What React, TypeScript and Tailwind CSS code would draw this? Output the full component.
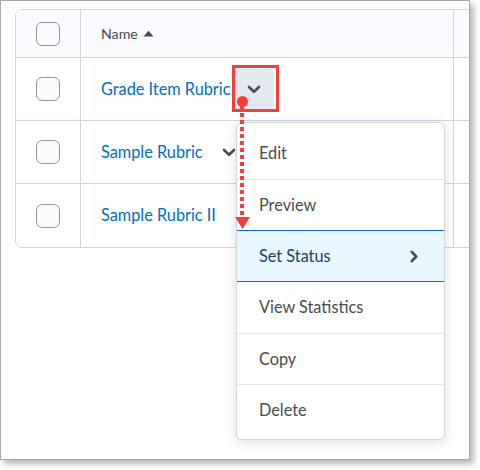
import React from "react";

const rows = [
  { name: "Grade Item Rubric", active: true },
  { name: "Sample Rubric", active: false, chevron: true },
  { name: "Sample Rubric II", active: false },
];

const menuItems = ["Edit", "Preview", "Set Status", "View Statistics", "Copy", "Delete"];

function ChevronDown({ className = "" }: { className?: string }) {
  return (
    <svg width="14" height="9" viewBox="0 0 14 9" className={className}>
      <path d="M2 2 L7 6.8 L12 2" fill="none" stroke="#494c4e" strokeWidth="2.6" strokeLinecap="round" strokeLinejoin="round" />
    </svg>
  );
}

function Checkbox() {
  return <div className="w-[24px] h-[24px] rounded-[6px] border border-[#8d949a] bg-[#f9fbff]" />;
}

export default function App() {
  return (
    <div className="w-[480px] h-[470px] bg-white font-['Lato',sans-serif]">
      <div className="relative w-[470px] h-[460px] border border-[#a8a8a8] bg-white overflow-hidden shadow-[4px_4px_6px_rgba(0,0,0,0.28)]">
        {/* Table */}
        <div className="mt-[8px] ml-[14px] w-[520px] border border-[#cfd6de] rounded-l-[7px] overflow-hidden">
          <div className="flex h-[48px] bg-[#f9fbff] border-b border-[#cfd6de]">
            <div className="w-[65px] border-r border-[#cfd6de] flex items-center justify-center">
              <Checkbox />
            </div>
            <div className="w-[373px] border-r border-[#cfd6de] flex items-center pl-[20px] text-[14.2px] text-[#494c4e]">
              Name
              <svg width="11" height="7" viewBox="0 0 11 7" className="ml-[5px]">
                <path d="M0.5 6.5 L5.5 0.8 L10.5 6.5 Z" fill="#494c4e" />
              </svg>
            </div>
            <div className="flex-1" />
          </div>
          {rows.map((r, i) => (
            <div key={r.name} className={`flex h-[63px] ${i < rows.length - 1 ? "border-b border-[#cfd6de]" : ""}`}>
              <div className="w-[65px] border-r border-[#cfd6de] flex items-center justify-center">
                <Checkbox />
              </div>
              <div className="w-[373px] border-r border-[#cfd6de] flex items-center pl-[20px]">
                <span className="text-[16.3px] text-[#006fbf]">{r.name}</span>
                {r.active && (
                  <div className="ml-[3px] w-[41px] h-[40px] rounded-[4px] bg-[#e3e9f1] flex items-center justify-center">
                    <ChevronDown />
                  </div>
                )}
                {r.chevron && (
                  <div className="ml-[6px] w-[40px] h-[40px] flex items-center justify-center">
                    <ChevronDown />
                  </div>
                )}
              </div>
              <div className="flex-1" />
            </div>
          ))}
        </div>

        {/* Dropdown menu */}
        <div className="absolute left-[235px] top-[121px] w-[209px] h-[318px] rounded-[6px] border border-[#cfd6de] bg-white shadow-[0_2px_12px_rgba(0,0,0,0.14)] py-[5px]">
          {menuItems.map((item, i) => {
            const selected = item === "Set Status";
            const prevSelected = menuItems[i - 1] === "Set Status";
            return (
              <div
                key={item}
                className={`flex items-center justify-between pl-[22px] pr-[26px] text-[16.3px] ${
                  selected
                    ? "bg-[#e8f6fd] border-y border-[#006fbf] text-[#1c3d66] h-[52px]"
                    : i > 0 && !prevSelected
                      ? "h-[51px] border-t border-[#e3e7ec] text-[#494c4e]"
                      : "h-[51px] text-[#494c4e]"
                }`}
              >
                <span>{item}</span>
                {selected && (
                  <svg width="8" height="13" viewBox="0 0 8 13">
                    <path d="M1.8 1.8 L6.2 6.5 L1.8 11.2" fill="none" stroke="#494c4e" strokeWidth="2.6" strokeLinecap="round" strokeLinejoin="round" />
                  </svg>
                )}
              </div>
            );
          })}
        </div>

        {/* Annotation */}
        <div className="absolute left-[231px] top-[64px] w-[47px] h-[47px] border-[3px] border-[#f2403f]" />
        <div className="absolute left-[239px] top-[105px] flex flex-col gap-[3px]">
          {Array.from({ length: 16 }).map((_, i) => (
            <div key={i} className="w-[4px] h-[4px] bg-[#f2403f]" />
          ))}
        </div>
        <div className="absolute left-[236px] top-[95px] w-[11px] h-[11px] rounded-full bg-[#f2403f]" />
        <svg width="15" height="12" viewBox="0 0 15 12" className="absolute left-[234px] top-[216px]">
          <path d="M0 0 L15 0 L7.5 12 Z" fill="#f2403f" />
        </svg>
      </div>
    </div>
  );
}
